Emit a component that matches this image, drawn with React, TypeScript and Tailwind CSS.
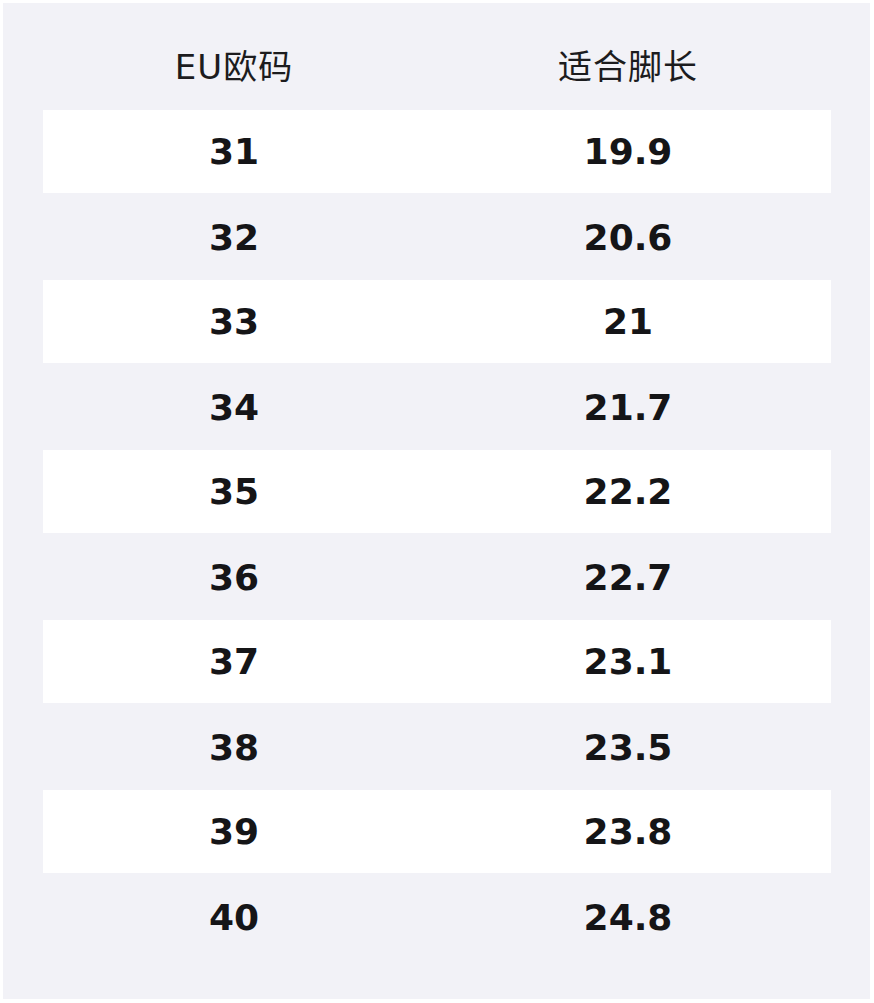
import React from "react";

const sizes: [string, string][] = [
    ["31", "19.9"],
    ["32", "20.6"],
    ["33", "21"],
    ["34", "21.7"],
    ["35", "22.2"],
    ["36", "22.7"],
    ["37", "23.1"],
    ["38", "23.5"],
    ["39", "23.8"],
    ["40", "24.8"],
];

const App: React.FC = () => {
    return (
        <div
            className="w-[874px] h-[1003px] bg-white p-[3px]"
            style={{ fontFamily: '"DejaVu Sans", "Noto Sans CJK SC", sans-serif' }}
        >
            <div className="h-[996px] w-[867px] bg-[#f2f2f7] pt-[21px] pl-[40px] pr-[39px]">
                {/* header */}
                <div className="grid grid-cols-[382px_1fr] h-[86px] items-center text-[34px] text-[#1c1c1e] tracking-[1px]">
                    <div className="text-center">EU欧码</div>
                    <div className="text-center">适合脚长</div>
                </div>

                {/* rows */}
                {sizes.map(([eu, len], i) => (
                    <div
                        key={eu}
                        className={
                            i % 2 === 0
                                ? "grid grid-cols-[382px_1fr] h-[83px] mb-[2px] items-center bg-white text-[36px] font-bold text-[#151517]"
                                : "grid grid-cols-[382px_1fr] h-[85px] items-center text-[36px] font-bold text-[#151517]"
                        }
                    >
                        <div className="text-center">{eu}</div>
                        <div className="text-center">{len}</div>
                    </div>
                ))}
            </div>
        </div>
    );
};

export default App;
